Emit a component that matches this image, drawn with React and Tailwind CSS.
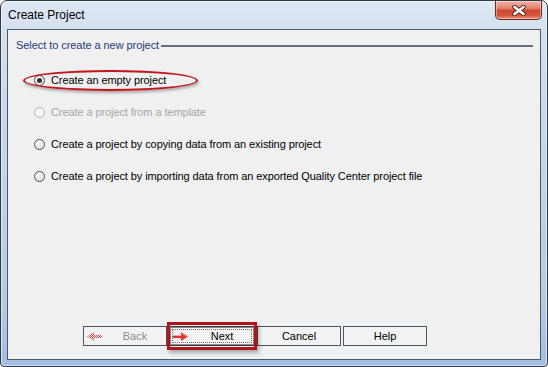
import React from "react";

function Radio({ checked, disabled }) {
  return (
    <span
      className={
        disabled
          ? "w-[11px] h-[11px] rounded-full border border-[#b4b4b4] bg-[#f6f6f6] shrink-0 flex items-center justify-center"
          : "w-[11px] h-[11px] rounded-full border border-[#4a4a4a] bg-[linear-gradient(135deg,#ffffff,#dcdcdc)] shrink-0 flex items-center justify-center"
      }
    >
      {checked && <span className="w-[5px] h-[5px] rounded-full bg-[#363636]" />}
    </span>
  );
}

function RightArrow() {
  return (
    <svg width="15" height="9" viewBox="0 0 15 9" className="shrink-0">
      <path d="M0 3H8V0L15 4.5L8 9V6H0Z" fill="#e2342c" />
      <path d="M0 3.5H8.5" stroke="#f6a49c" strokeWidth="1" />
      <path d="M8.5 1L13.5 4.5" stroke="#f58a80" strokeWidth="1" />
    </svg>
  );
}

function LeftArrowDisabled() {
  return (
    <svg width="15" height="9" viewBox="0 0 15 9" className="shrink-0">
      <defs>
        <pattern id="dith" width="2" height="2" patternUnits="userSpaceOnUse">
          <rect width="1" height="1" fill="#e04040" />
          <rect x="1" y="1" width="1" height="1" fill="#e04040" />
        </pattern>
      </defs>
      <path d="M15 3H7V0L0 4.5L7 9V6H15Z" fill="url(#dith)" />
    </svg>
  );
}

function CloseButton() {
  return (
    <div className="w-[47px] h-[19px] rounded-b-[5px] border border-t-0 border-[#6a2a20] bg-[linear-gradient(to_bottom,#f0b4a8_0%,#e2836f_40%,#d04a33_52%,#d6553c_80%,#e8907a_100%)] shadow-[inset_0_0_0_1px_rgba(255,255,255,0.4)] flex items-center justify-center">
      <svg width="14" height="11" viewBox="0 0 14 11">
        <path d="M2.5 2L11.5 9M11.5 2L2.5 9" stroke="#5a231c" strokeWidth="4.5" strokeLinecap="round" />
        <path d="M2.5 2L11.5 9M11.5 2L2.5 9" stroke="#ffffff" strokeWidth="2.6" strokeLinecap="round" />
      </svg>
    </div>
  );
}

export default function App() {
  return (
    <div className="w-[548px] h-[367px] flex flex-col rounded-t-[7px] rounded-b-[4px] border border-[#2e3946] bg-[linear-gradient(to_bottom,#dfe8f3_0%,#d3e0ef_8%,#c4d6ea_40%,#b3cae5_85%,#a1bee0_100%)] shadow-[inset_0_0_0_1px_rgba(255,255,255,0.55)] overflow-hidden font-['Liberation_Sans',Arial,sans-serif]">
      <div className="h-[28px] flex items-start justify-between pl-[7px] pr-[5px] shrink-0">
        <span className="mt-[7px] text-[12px] leading-[15px] text-[#000]">Create Project</span>
        <CloseButton />
      </div>
      <div className="mx-[6px] flex-1 border border-[#4f5866] bg-[#f0f0f0] flex flex-col relative">
        <div className="flex items-center pt-[9px] pl-[8px] pr-[7px]">
          <span className="text-[11px] leading-[13px] text-[#1e3c78] whitespace-nowrap tracking-[-0.06px]">Select to create a new project</span>
          <span className="flex-1 h-[2px] bg-[#666f7d] ml-[2px]" />
        </div>
        <div className="flex flex-col mt-[12px] pl-[26px] tracking-[-0.09px]">
          <div className="h-[32px] flex items-center gap-[6px] text-[11px] text-[#000]">
            <Radio checked />
            <span>Create an empty project</span>
          </div>
          <div className="h-[32px] flex items-center gap-[6px] text-[11px] text-[#a6a6a6]">
            <Radio disabled />
            <span>Create a project from a template</span>
          </div>
          <div className="h-[32px] flex items-center gap-[6px] text-[11px] text-[#000]">
            <Radio />
            <span>Create a project by copying data from an existing project</span>
          </div>
          <div className="h-[32px] flex items-center gap-[6px] text-[11px] text-[#000]">
            <Radio />
            <span>Create a project by importing data from an exported Quality Center project file</span>
          </div>
        </div>
        <div className="flex-1" />
        <div className="flex gap-[2px] ml-[75px] mb-[13px] text-[11px]">
          <button className="w-[84px] h-[20px] border border-[#4b5565] bg-[#f2f2f2] flex items-center pl-[3px] text-[#8c8c8c]">
            <LeftArrowDisabled />
            <span className="flex-1 text-center pl-[2px]">Back</span>
          </button>
          <div className="relative">
            <button className="relative w-[86px] h-[20px] border border-[#3a3a3a] bg-[#f2f2f2] flex items-center pl-[3px] text-[#000] shadow-[inset_0_0_0_1px_#8a8a8a]">
              <span className="absolute inset-[2px] border border-dotted border-[#6a6a6a]" />
              <RightArrow />
              <span className="flex-1 text-center pl-[2px]">Next</span>
            </button>
            <span className="absolute -left-[2px] -right-[2px] -top-[4px] -bottom-[4px] border-[3px] border-[#b3121b] shadow-[2px_3px_4px_rgba(0,0,0,0.3)]" />
          </div>
          <button className="w-[84px] h-[20px] border border-[#4b5565] bg-[#f2f2f2] flex items-center justify-center text-[#000]">
            Cancel
          </button>
          <button className="w-[84px] h-[20px] border border-[#4b5565] bg-[#f2f2f2] flex items-center justify-center text-[#000]">
            Help
          </button>
        </div>
        <span className="absolute left-[15px] top-[40px] w-[175px] h-[21px] rounded-[50%] border-2 border-[#c4161c] shadow-[1px_2px_3px_rgba(0,0,0,0.3)]" />
      </div>
      <div className="h-[6px] shrink-0" />
    </div>
  );
}
